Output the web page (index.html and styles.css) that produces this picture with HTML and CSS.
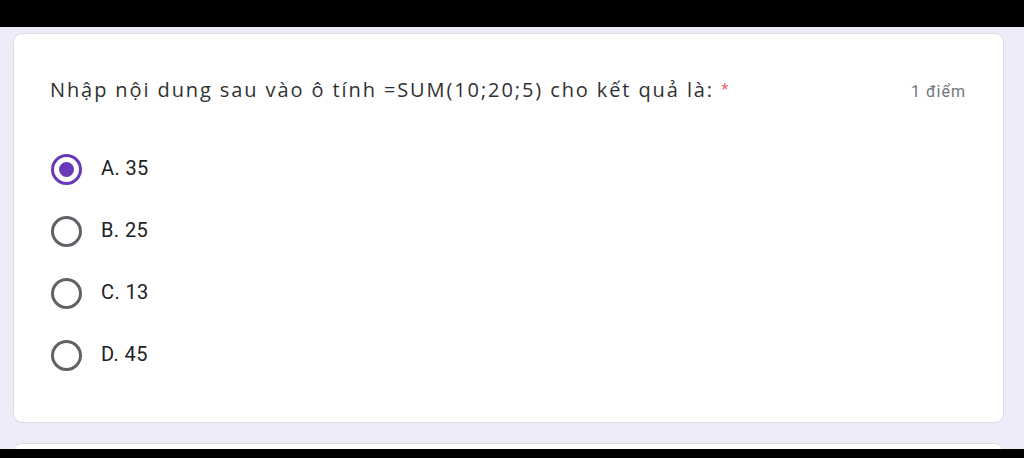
FILE: index.html
```html
<!DOCTYPE html>
<html lang="vi">
<head>
    <meta charset="UTF-8">
    <meta name="viewport" content="width=device-width, initial-scale=1.0">
    <title>Câu hỏi</title>
    <link rel="stylesheet" href="styles.css">
</head>
<body>

<div class="top-bar"></div>

<div class="page">
    <div class="card">
        <div class="question-head">
            <div class="question">Nhập nội dung sau vào ô tính =SUM(10;20;5) cho kết quả là: <span class="required">*</span></div>
            <div class="points">1 điểm</div>
        </div>
        <div class="options">
            <label class="option">
                <span class="radio checked"><span class="dot"></span></span>
                <span class="label">A. 35</span>
            </label>
            <label class="option">
                <span class="radio"></span>
                <span class="label">B. 25</span>
            </label>
            <label class="option">
                <span class="radio"></span>
                <span class="label">C. 13</span>
            </label>
            <label class="option">
                <span class="radio"></span>
                <span class="label">D. 45</span>
            </label>
        </div>
    </div>
    <div class="card next"></div>
</div>

<div class="bottom-bar"></div>

</body>
</html>
```

FILE: styles.css
```css
body {
    margin: 0;
    background: #000;
    font-family: 'Roboto', 'Liberation Sans', sans-serif;
    color: #202124;
    height: 458px;
    overflow: hidden;
}
.top-bar {
    height: 27px;
    background: #000;
}
.page {
    background: #efebf8;
    height: 422px;
    padding: 6px 20px 0 13px;
    box-sizing: border-box;
    overflow: hidden;
}
.card {
    background: #fff;
    border: 1px solid #dadce0;
    border-radius: 9px;
    height: 390px;
    box-sizing: border-box;
    padding: 41px 37px 0 36px;
}
.card.next {
    margin-top: 20px;
    height: 40px;
}
.question-head {
    display: flex;
    justify-content: space-between;
    align-items: baseline;
}
.question {
    font-family: 'Open Sans', 'Liberation Sans', sans-serif;
    font-size: 20px;
    letter-spacing: 1.9px;
    line-height: 28px;
    color: #303134;
}
.required {
    color: #e3564a;
    font-size: 14px;
    vertical-align: 3px;
    letter-spacing: 0;
}
.points {
    font-size: 16px;
    letter-spacing: 1px;
    color: #70757a;
}
.options {
    margin-top: 34px;
    display: flex;
    flex-direction: column;
}
.option {
    display: flex;
    align-items: center;
    height: 62px;
}
.radio {
    width: 31px;
    height: 31px;
    box-sizing: border-box;
    border: 3px solid #5f6368;
    border-radius: 50%;
    display: flex;
    align-items: center;
    justify-content: center;
    margin-left: 1px;
}
.radio.checked {
    border-color: #673ab7;
}
.dot {
    width: 15px;
    height: 15px;
    border-radius: 50%;
    background: #673ab7;
}
.label {
    margin-left: 19px;
    font-size: 20px;
    letter-spacing: 0.4px;
    line-height: 24px;
    margin-top: -3px;
}
.bottom-bar {
    height: 9px;
    background: #000;
}
```
